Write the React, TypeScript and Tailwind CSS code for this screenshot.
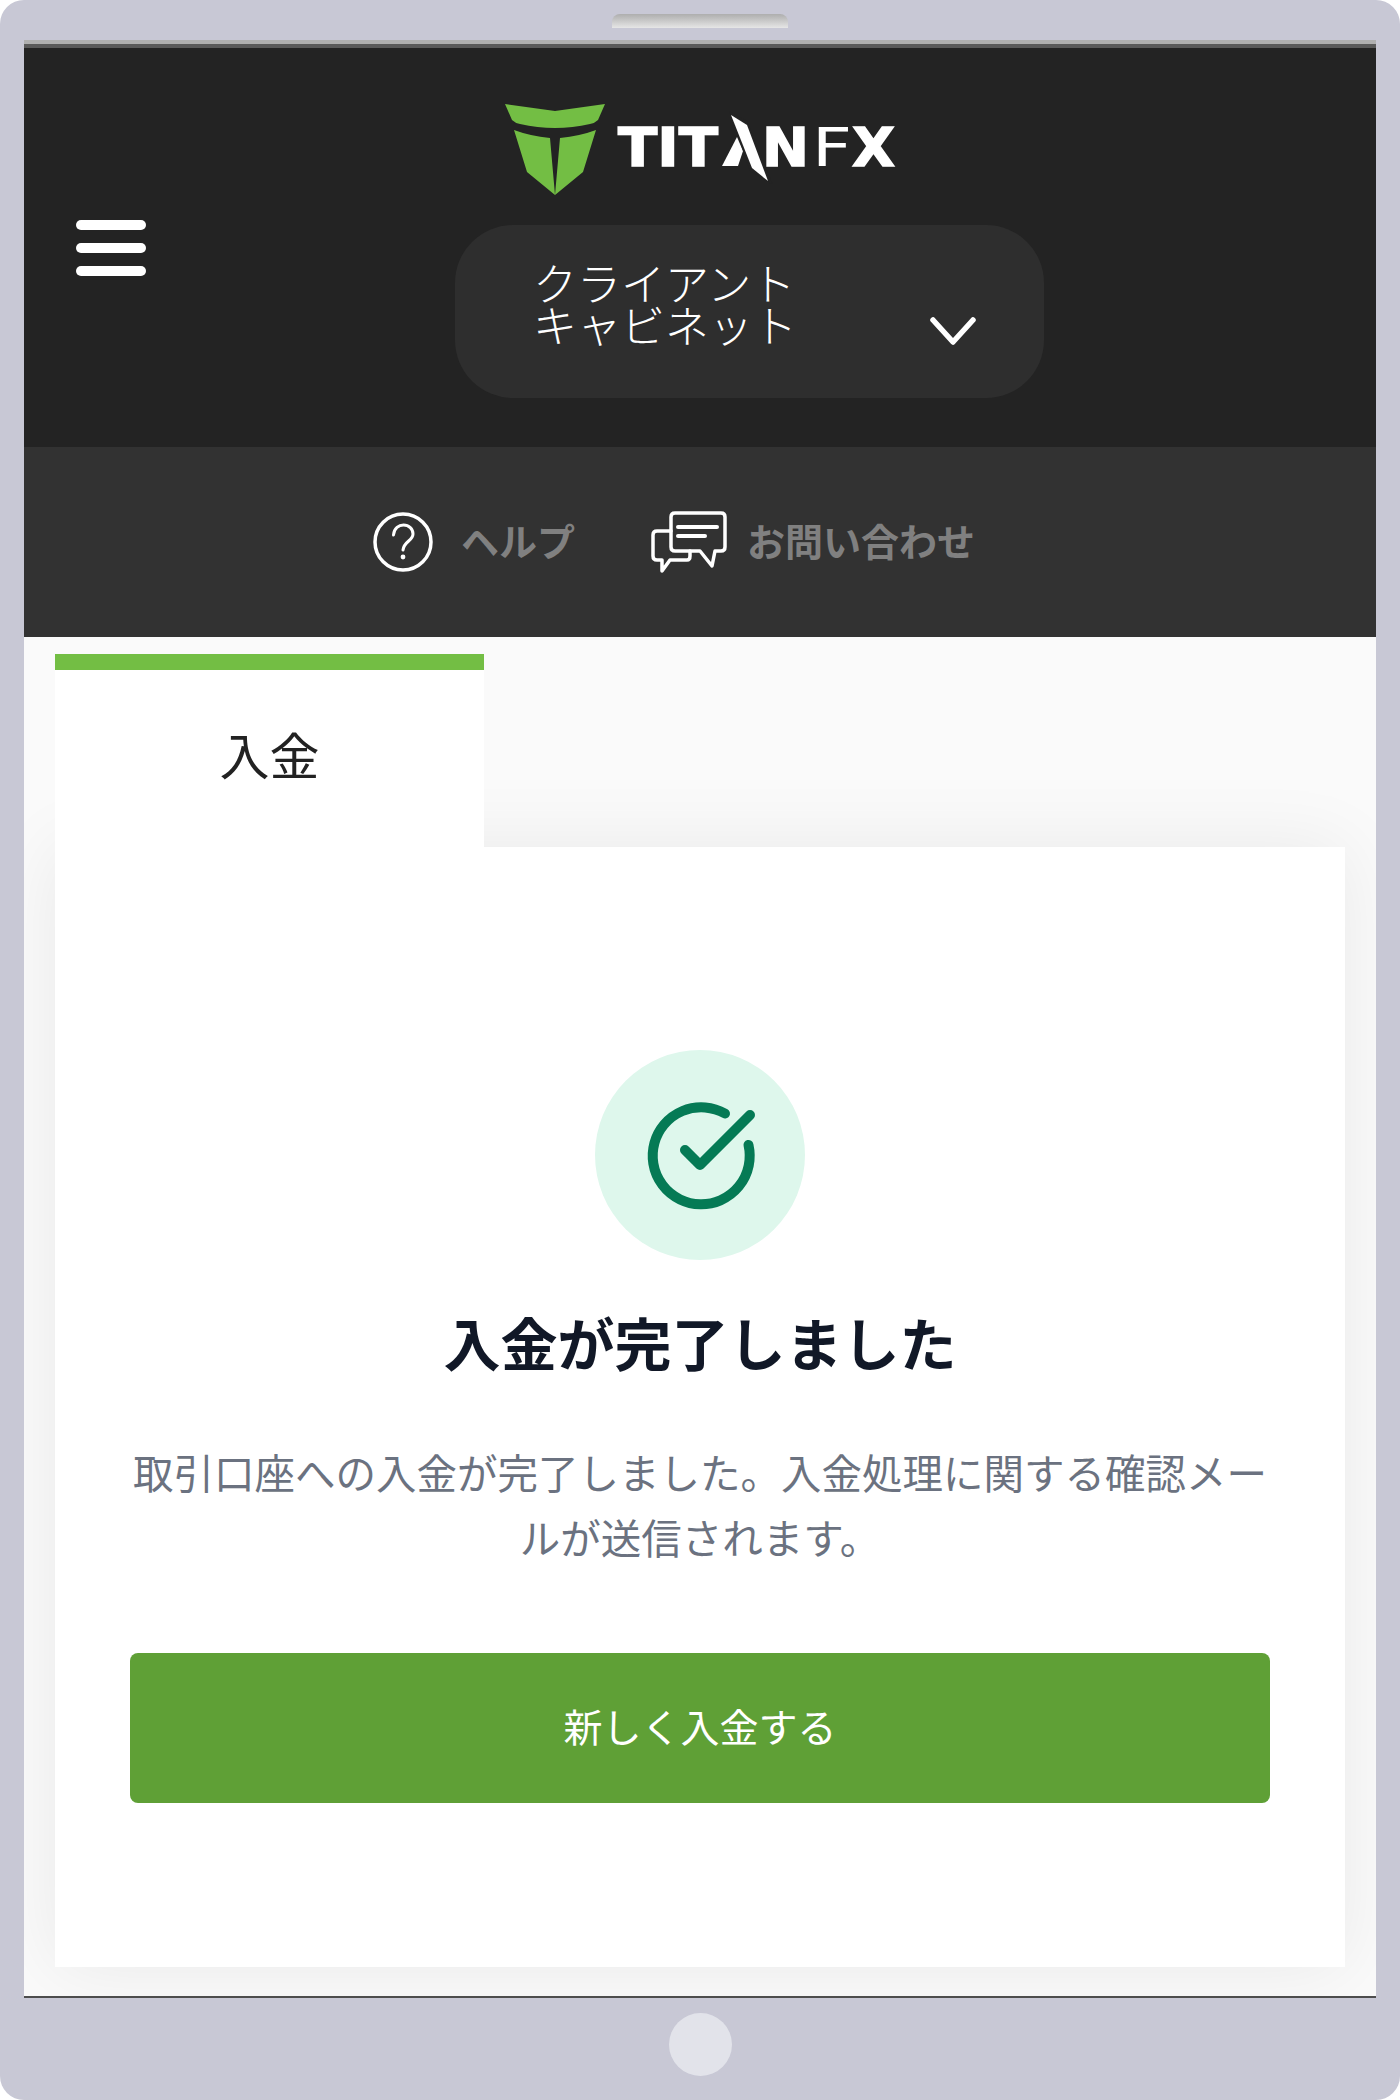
const jp = "font-['Noto_Sans_CJK_JP','Noto_Sans',sans-serif]";

function TitanLogo() {
  return (
    <svg width="400" height="95" viewBox="0 0 400 95" aria-label="Titan FX">
      {/* shield */}
      <path fill="#73be44" d="M0 1 L50 8 L100 1 L93 17 Q90 20 85 21 Q50 29 15 21 Q10 20 7 17 Z" />
      <path fill="#73be44" d="M9 27 Q25 33 45 35 L50 92 L22 69 Z" />
      <path fill="#73be44" d="M91 27 Q75 33 55 35 L50 92 L78 69 Z" />
      {/* wordmark */}
      <g fontFamily="'DejaVu Sans', sans-serif" fontWeight="700" fontSize="54" fill="#ffffff" stroke="#ffffff" strokeWidth="1.5">
        <text x="113" y="63" textLength="100" lengthAdjust="spacingAndGlyphs">TIT</text>
        <text x="257" y="63" textLength="47" lengthAdjust="spacingAndGlyphs">N</text>
        <text x="347" y="63" textLength="43" lengthAdjust="spacingAndGlyphs">X</text>
      </g>
      <text x="307" y="63" fontFamily="'DejaVu Sans', sans-serif" fontSize="54" fill="#ffffff" textLength="40" lengthAdjust="spacingAndGlyphs">F</text>
      {/* the slash that stands in for the A */}
      <path fill="#ffffff" d="M217 63 L232 34 L238 48 L233 63 Z" />
      <path fill="#232323" d="M224 8 L242 18 L268 82 L245 68 Z" />
      <path fill="#ffffff" d="M226 12 L242 22 L263 78 L247 65 Z" />
    </svg>
  );
}

function HelpIcon() {
  return (
    <svg width="60" height="60" viewBox="0 0 60 60" fill="none" stroke="#ffffff">
      <circle cx="30" cy="30" r="28" strokeWidth="3.5" />
      <path d="M20.5 23 C21 16 26 13 30.5 13 C36 13 40 17 40 22 C40 29 31 29 30 38" strokeWidth="3" strokeLinecap="round" />
      <circle cx="30" cy="45" r="2.4" fill="#ffffff" stroke="none" />
    </svg>
  );
}

function ChatIcon() {
  return (
    <svg width="76" height="62" viewBox="0 0 76 62" fill="none" stroke="#ffffff" strokeWidth="3.5" strokeLinejoin="round" strokeLinecap="round">
      <path d="M24 2 H70 Q74 2 74 6 V36 Q74 40 70 40 H64 L61 55 L49 40 H24 Q20 40 20 36 V6 Q20 2 24 2 Z" />
      <path d="M20 20 H6 Q2 20 2 24 V45 Q2 49 6 49 H11 V60 L19 49 H36 Q39 49 39 45 V40" />
      <path d="M27 16 H66" strokeWidth="4" />
      <path d="M27 25 H54" strokeWidth="4" />
    </svg>
  );
}

function CheckIcon() {
  return (
    <svg width="120" height="120" viewBox="0 0 120 120" fill="none" stroke="#057a55" strokeWidth="10" strokeLinecap="round" strokeLinejoin="round">
      <path d="M85 18.5 A 48.5 48.5 0 1 0 108.5 50" />
      <path d="M45 55 L60 70 L110 20" />
    </svg>
  );
}

export default function App() {
  return (
    <div className={`${jp} w-[1400px] h-[2100px] bg-[#c8c8d5] rounded-[24px] flex flex-col items-center pt-[14px] overflow-hidden`}>
      {/* speaker */}
      <div className="w-[176px] h-[14px] rounded-t-[8px] bg-gradient-to-b from-[#aeaeae] to-[#e6e6e6]" />

      {/* screen */}
      <div className="w-[1352px] h-[1958px] mt-[12px] flex flex-col border-t-[4px] border-t-[#b0b0b0] border-b-[2px] border-b-[#4d4d4d]">
        <div className="h-[4px] bg-[#5a5a5a]" />

        {/* header */}
        <header className="h-[399px] bg-[#232323] flex flex-col items-center pt-[55px]">
          <div className="w-[400px] h-[95px] ml-[10px]">
            <TitanLogo />
          </div>
          <div className="w-full flex items-start mt-[27px] pl-[52px]">
            <div className="w-[70px] mt-[-5px] flex flex-col gap-[13px]">
              <span className="h-[10px] rounded-full bg-white" />
              <span className="h-[10px] rounded-full bg-white" />
              <span className="h-[10px] rounded-full bg-white" />
            </div>
            <button className="ml-[309px] w-[589px] h-[173px] rounded-[58px] bg-[#2e2e2e] flex items-start pl-[78px] pt-[36px] text-left">
              <span className="text-[44px] leading-[42px] font-light text-white">
                クライアント
                <br />
                キャビネット
              </span>
              <svg className="ml-[133px] mt-[56px]" width="46" height="28" viewBox="0 0 46 28" fill="none" stroke="#ffffff" strokeWidth="5.5" strokeLinecap="round" strokeLinejoin="round">
                <path d="M3 3 L23 25 L43 3" />
              </svg>
            </button>
          </div>
        </header>

        {/* help bar */}
        <nav className="h-[190px] bg-[#323232] flex items-center justify-center gap-[76px] pr-[52px]">
          <a className="flex items-center gap-[28px]">
            <HelpIcon />
            <span className="text-[38px] font-bold text-[#808080] mb-[6px]">ヘルプ</span>
          </a>
          <a className="flex items-center gap-[20px]">
            <ChatIcon />
            <span className="text-[38px] font-bold text-[#808080] mb-[6px]">お問い合わせ</span>
          </a>
        </nav>

        {/* body */}
        <main className="flex-1 bg-[#fafafa] px-[31px] pt-[17px] flex flex-col overflow-hidden">
          <div className="relative z-10 w-[429px] h-[193px] bg-white border-t-[16px] border-t-[#73be44] flex items-center justify-center pb-[10px]">
            <span className="text-[50px] text-[#222222]">入金</span>
          </div>
          <section className="h-[1120px] bg-white shadow-[0_0_70px_rgba(0,0,0,0.07)] flex flex-col items-center px-[75px] pt-[203px]">
            <div className="w-[210px] h-[210px] rounded-full bg-[#def7ec] flex items-center justify-center">
              <CheckIcon />
            </div>
            <h1 className="mt-[39px] text-[57px] leading-[84px] font-bold text-[#111827]">入金が完了しました</h1>
            <p className="mt-[56px] text-[40.5px] leading-[65px] text-[#6b7280] text-center">
              取引口座への入金が完了しました。入金処理に関する確認メールが送信されます。
            </p>
            <button className="mt-[84px] w-full h-[150px] rounded-[8px] bg-[#5fa036] text-[39px] text-white pb-[6px]">
              新しく入金する
            </button>
          </section>
        </main>
      </div>

      {/* home button */}
      <div className="mt-[15px] w-[63px] h-[63px] rounded-full bg-[#e2e3ea]" />
    </div>
  );
}
